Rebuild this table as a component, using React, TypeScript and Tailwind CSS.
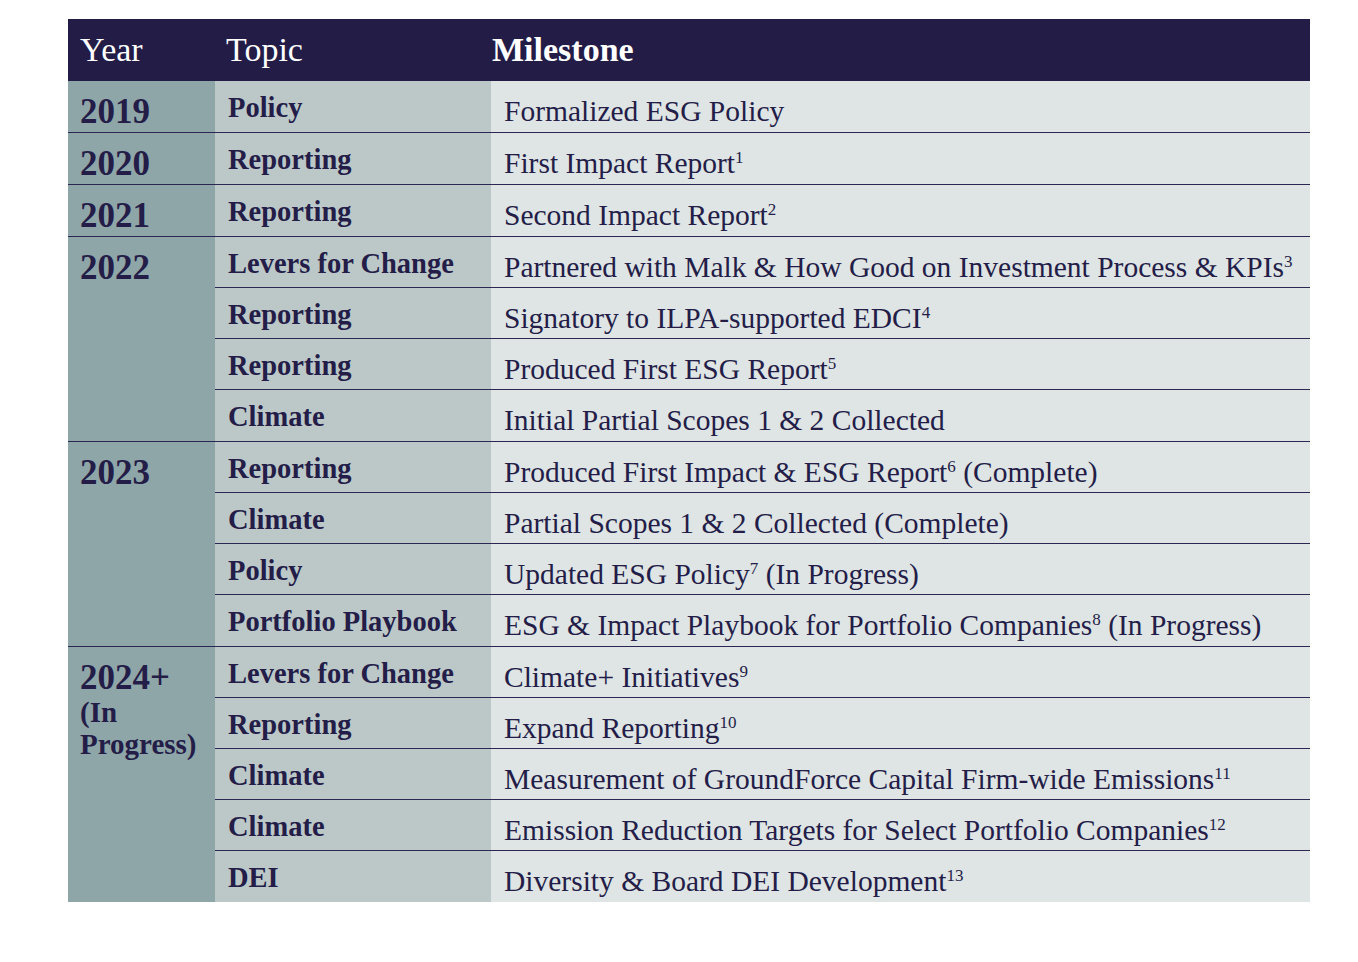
import React from "react";

type Row = { topic: string; text: string; sup?: string; suffix?: string };
type Group = { year: React.ReactNode; rows: Row[] };

const groups: Group[] = [
  { year: "2019", rows: [{ topic: "Policy", text: "Formalized ESG Policy" }] },
  { year: "2020", rows: [{ topic: "Reporting", text: "First Impact Report", sup: "1" }] },
  { year: "2021", rows: [{ topic: "Reporting", text: "Second Impact Report", sup: "2" }] },
  {
    year: "2022",
    rows: [
      { topic: "Levers for Change", text: "Partnered with Malk & How Good on Investment Process & KPIs", sup: "3" },
      { topic: "Reporting", text: "Signatory to ILPA-supported EDCI", sup: "4" },
      { topic: "Reporting", text: "Produced First ESG Report", sup: "5" },
      { topic: "Climate", text: "Initial Partial Scopes 1 & 2 Collected" },
    ],
  },
  {
    year: "2023",
    rows: [
      { topic: "Reporting", text: "Produced First Impact & ESG Report", sup: "6", suffix: " (Complete)" },
      { topic: "Climate", text: "Partial Scopes 1 & 2 Collected (Complete)" },
      { topic: "Policy", text: "Updated ESG Policy", sup: "7", suffix: " (In Progress)" },
      { topic: "Portfolio Playbook", text: "ESG & Impact Playbook for Portfolio Companies", sup: "8", suffix: " (In Progress)" },
    ],
  },
  {
    year: (
      <>
        <div>2024+</div>
        <div className="text-[29px] leading-[32px]">(In</div>
        <div className="text-[29px] leading-[32px]">Progress)</div>
      </>
    ),
    rows: [
      { topic: "Levers for Change", text: "Climate+ Initiatives", sup: "9" },
      { topic: "Reporting", text: "Expand Reporting", sup: "10" },
      { topic: "Climate", text: "Measurement of GroundForce Capital Firm-wide Emissions", sup: "11" },
      { topic: "Climate", text: "Emission Reduction Targets for Select Portfolio Companies", sup: "12" },
      { topic: "DEI", text: "Diversity & Board DEI Development", sup: "13" },
    ],
  },
];

export default function App() {
  return (
    <div
      className="w-[1358px] h-[962px] bg-white pt-[19px] pl-[68px]"
      style={{ fontFamily: '"Liberation Serif", "Times New Roman", serif' }}
    >
      <div className="w-[1242px] text-[#231d48]">
        <div className="flex h-[62px] bg-[#221c47] text-white text-[34px] leading-[40px] pt-[11px]">
          <div className="w-[147px] pl-[12px]">Year</div>
          <div className="w-[276px] pl-[11px]">Topic</div>
          <div className="flex-1 pl-[1px] font-semibold">Milestone</div>
        </div>
        {groups.map((g, gi) => (
          <div key={gi} className={`flex ${gi < groups.length - 1 ? "border-b-[1.5px] border-[#2b2752]" : ""}`}>
            <div className="w-[147px] shrink-0 bg-[#8fa6a8] pl-[12px] pt-[13px] text-[35px] leading-[36px] font-semibold">
              {g.year}
            </div>
            <div className="flex-1 flex flex-col">
              {g.rows.map((r, ri) => {
                const last = ri === g.rows.length - 1;
                return (
                  <div
                    key={ri}
                    className={`flex h-[51px] ${!last ? "border-b-[1.5px] border-[#2b2752]" : ""}`}
                  >
                    <div className="w-[276px] shrink-0 bg-[#bcc8c8] pl-[13px] pt-[9px] text-[28.5px] leading-[36px] font-semibold whitespace-nowrap">
                      {r.topic}
                    </div>
                    <div className="flex-1 bg-[#dfe4e4] pl-[13px] pt-[12px] text-[29.5px] leading-[36px] whitespace-nowrap">
                      {r.text}
                      {r.sup && <sup className="text-[17px] relative -top-[10px]">{r.sup}</sup>}
                      {r.suffix}
                    </div>
                  </div>
                );
              })}
            </div>
          </div>
        ))}
      </div>
    </div>
  );
}
